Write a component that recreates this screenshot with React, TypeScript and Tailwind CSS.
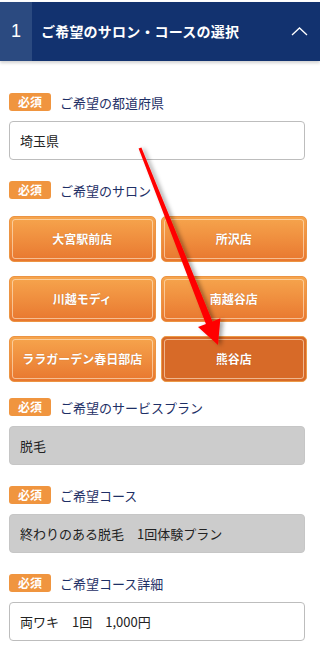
import React from "react";

const FONT = { fontFamily: '"Noto Sans CJK JP", "Noto Sans", sans-serif' };

const SALONS: { name: string; active?: boolean }[] = [
  { name: "大宮駅前店" },
  { name: "所沢店" },
  { name: "川越モディ" },
  { name: "南越谷店" },
  { name: "ララガーデン春日部店" },
  { name: "熊谷店", active: true },
];

function Label({ text }: { text: string }) {
  return (
    <div className="flex h-[18px] items-center gap-[9px]">
      <span className="flex h-[18px] w-[42px] items-center justify-center rounded-[3px] bg-[#f0953f] text-[12px] font-bold leading-none text-white">
        必須
      </span>
      <span className="text-[13px] leading-none text-[#1e2f66]">{text}</span>
    </div>
  );
}

function Field({ value, disabled }: { value: string; disabled?: boolean }) {
  return (
    <div
      className={
        "mt-[10px] flex h-[39px] w-[296px] items-center rounded-[4px] border px-[10px] text-[13px] text-[#222] " +
        (disabled ? "border-[#c6c6c6] bg-[#cccccc]" : "border-[#bdbdbd] bg-white")
      }
    >
      {value}
    </div>
  );
}

function SalonButton({ name, active }: { name: string; active?: boolean }) {
  return (
    <button
      type="button"
      className={
        "flex h-[46px] items-center justify-center rounded-[5px] border p-[2px] " +
        (active
          ? "border-[#eb9a48] bg-[#d76a28]"
          : "border-[#ec9443] bg-gradient-to-b from-[#f6a54d] to-[#e8772f]")
      }
    >
      <span className="flex h-full w-full items-center justify-center rounded-[3px] border border-[rgba(255,235,210,0.6)] text-[12px] font-bold text-white [text-shadow:0_0_1px_rgba(120,50,0,0.4)]">
        {name}
      </span>
    </button>
  );
}

function Arrow() {
  return (
    <svg className="pointer-events-none absolute left-0 top-0" width="320" height="655" viewBox="0 0 320 655">
      <defs>
        <filter id="sh" x="-20%" y="-20%" width="140%" height="140%">
          <feDropShadow dx="3" dy="1" stdDeviation="2" floodColor="#000" floodOpacity="0.35" />
        </filter>
      </defs>
      <polygon
        points="138.6,148.6 141.4,147.4 212.5,321.4 220.4,318.3 218,345 198,327.1 205.9,324"
        fill="#ff0000"
        filter="url(#sh)"
      />
    </svg>
  );
}

export default function App() {
  return (
    <div className="relative h-[655px] w-[320px] overflow-hidden bg-white" style={FONT}>
      <div className="mt-[2px] flex h-[59px] bg-[#12326f] shadow-[0_2px_3px_rgba(0,0,0,0.18)]">
        <div className="flex w-[32px] items-center justify-center bg-[#2b4a80] font-['Liberation_Sans',sans-serif] text-[18px] text-white">
          1
        </div>
        <div className="flex flex-1 items-center pl-[9px] text-[14px] font-bold tracking-[0.2px] text-white">
          ご希望のサロン・コースの選択
        </div>
        <div className="flex w-[36px] items-center justify-center pr-[6px]">
          <svg width="17" height="9" viewBox="0 0 17 9">
            <path d="M1 8 L8.5 1 L16 8" fill="none" stroke="#fff" strokeWidth="1.3" />
          </svg>
        </div>
      </div>

      <div className="px-[9px] pt-[32px]">
        <Label text="ご希望の都道府県" />
        <Field value="埼玉県" />

        <div className="mt-[21px]">
          <Label text="ご希望のサロン" />
        </div>
        <div className="mt-[17px] grid w-[298px] grid-cols-2 gap-x-[5px] gap-y-[14px]">
          {SALONS.map((s) => (
            <SalonButton key={s.name} name={s.name} active={s.active} />
          ))}
        </div>

        <div className="mt-[16px]">
          <Label text="ご希望のサービスプラン" />
        </div>
        <Field value="脱毛" disabled />

        <div className="mt-[21px]">
          <Label text="ご希望コース" />
        </div>
        <Field value="終わりのある脱毛　1回体験プラン" disabled />

        <div className="mt-[21px]">
          <Label text="ご希望コース詳細" />
        </div>
        <Field value="両ワキ　1回　1,000円" />
      </div>

      <Arrow />
    </div>
  );
}
